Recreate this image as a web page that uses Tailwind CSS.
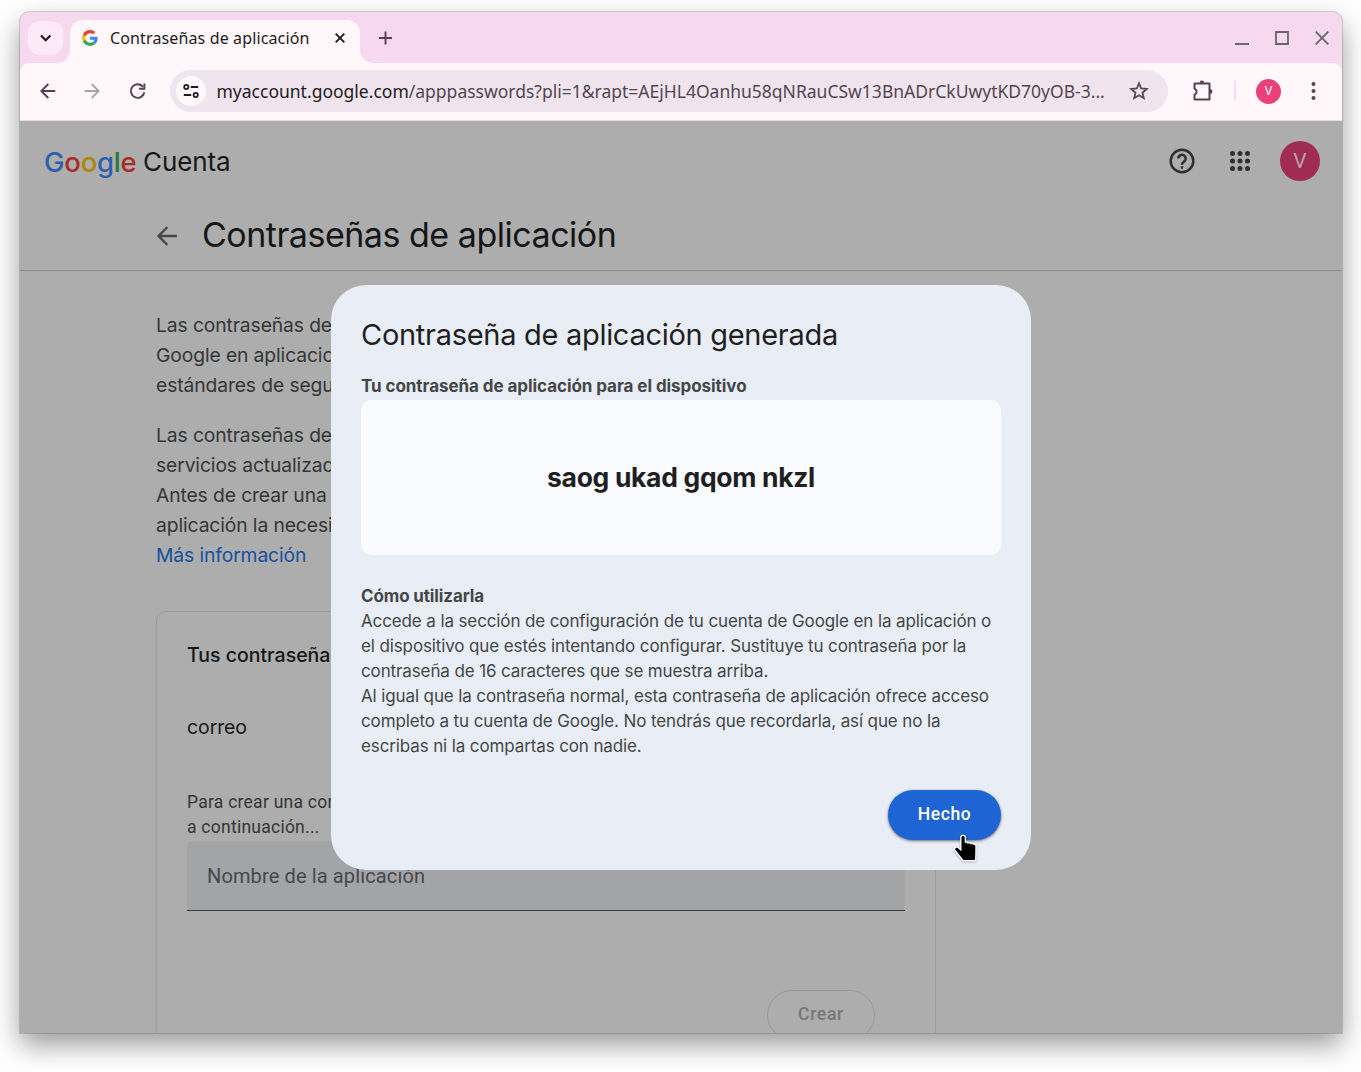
<!DOCTYPE html>
<html lang="es">
<head>
<meta charset="utf-8">
<title>Contraseñas de aplicación</title>
<script src="https://cdn.jsdelivr.net/npm/@tailwindcss/browser@4"></script>
</head>
<body class="h-[1072px] w-[1361px] overflow-hidden bg-white px-5 pt-3 font-[Inter,sans-serif]">
<div class="relative flex h-[1021px] w-[1322px] flex-col rounded-t-[10px] bg-[#f6d9ef] shadow-[0_0_0_1px_rgba(0,0,0,0.15),0_12px_28px_rgba(0,0,0,0.4)]">

  <!-- Tab strip -->
  <div class="flex h-[51px] shrink-0 items-start pt-2">
    <button class="ml-2 mt-px flex h-[34px] w-[35px] items-center justify-center rounded-xl bg-[#fde9f8]">
      <svg class="h-3 w-3" viewBox="0 0 12 12" fill="none" stroke="#1f1a1d" stroke-width="2.2"><path d="M1 3.500 5.700 8.200l4.700-4.700"/></svg>
    </button>
    <div class="relative ml-[7px] flex h-[43px] w-[290px] items-center rounded-t-[13px] bg-[#fff7fa] pb-[7px] pl-3">
      <svg class="absolute -left-[13px] bottom-0 h-[13px] w-[13px]" viewBox="0 0 13 13" fill="#fff7fa"><path d="M13 0v13H0A13 13 0 0 0 13 0"/></svg>
      <svg class="absolute -right-[13px] bottom-0 h-[13px] w-[13px]" viewBox="0 0 13 13" fill="#fff7fa"><path d="M0 0v13h13A13 13 0 0 1 0 0"/></svg>
      <svg class="h-4 w-4" viewBox="0 0 48 48"><path fill="#EA4335" d="M24 9.500c3.540 0 6.710 1.220 9.210 3.600l6.850-6.850C35.900 2.380 30.470 0 24 0 14.620 0 6.510 5.380 2.560 13.220l7.980 6.190C12.430 13.720 17.740 9.500 24 9.500z"/><path fill="#4285F4" d="M46.980 24.550c0-1.570-.15-3.090-.38-4.550H24v9.020h12.940c-.58 2.960-2.260 5.480-4.780 7.180l7.730 6c4.510-4.180 7.090-10.360 7.090-17.650z"/><path fill="#FBBC05" d="M10.530 28.590c-.48-1.450-.76-2.990-.76-4.590s.27-3.140.76-4.590l-7.980-6.190C.92 16.460 0 20.120 0 24s.92 7.540 2.560 10.780l7.970-6.190z"/><path fill="#34A853" d="M24 48c6.480 0 11.930-2.130 15.890-5.810l-7.730-6c-2.150 1.450-4.920 2.300-8.160 2.300-6.260 0-11.570-4.220-13.470-9.910l-7.980 6.190C6.510 42.620 14.620 48 24 48z"/></svg>
      <span class="ml-[12px] w-[201px] whitespace-nowrap font-['Noto_Sans',sans-serif] text-[16px] leading-6 tracking-[0.130px] text-[#1f1a1d]">Contraseñas de aplicación</span>
      <svg class="ml-[23.500px] mb-px h-[10px] w-[10px]" viewBox="0 0 10 10" stroke="#1f1a1d" stroke-width="1.900"><path d="m.7.7 8.600 8.600M9.300.7.7 9.300"/></svg>
    </div>
    <svg class="ml-[19px] mt-[11px] h-[14px] w-[14px]" viewBox="0 0 14 14" stroke="#5b3f52" stroke-width="1.900"><path d="M6.500 .5v13M0 7h13"/></svg>
    <div class="ml-auto mr-[13px] mt-[10.500px] flex gap-[26px]">
      <svg class="h-[14px] w-[14px]" viewBox="0 0 14 14" stroke="#686569" stroke-width="1.900"><path d="M0 13.500h14" transform="translate(0 -.5)"/></svg>
      <svg class="h-[14px] w-[14px]" viewBox="0 0 14 14" fill="none" stroke="#686569" stroke-width="1.800"><path d="M1 1h12v12H1z"/></svg>
      <svg class="h-[14px] w-[14px]" viewBox="0 0 14 14" stroke="#686569" stroke-width="1.800"><path d="m.7.7 12.600 12.600M13.300.7.7 13.300"/></svg>
    </div>
  </div>

  <!-- Toolbar -->
  <div class="flex h-[58px] shrink-0 items-center rounded-t-[9px] border-b border-[#ecdbe6] bg-[#fff7fa] pb-px pl-5">
    <svg class="h-4 w-4" viewBox="0 0 16 16" fill="none" stroke="#5b3f52" stroke-width="1.900"><path d="M15.300 8H1.500M8.300 1 1.300 8l7 7"/></svg>
    <svg class="ml-[28px] h-4 w-4" viewBox="0 0 16 16" fill="none" stroke="#aba3a8" stroke-width="1.800"><path d="M.7 8h13.800M7.700 1l7 7-7 7"/></svg>
    <svg class="ml-[29px] h-[18px] w-[18px]" viewBox="0 0 18 18" fill="none" stroke="#5b3f52" stroke-width="1.900"><path d="M14.200 5A6.800 6.800 0 1 0 15.400 10.300"/><path d="M15.400 1.500v5.300h-5.300"/></svg>
    <div class="ml-[23px] flex h-[42px] w-[998px] items-center rounded-full bg-[#f0e5ee] pl-[6px]">
      <div class="flex h-[30px] w-[30px] items-center justify-center rounded-full bg-[#fff7fa]">
        <svg class="h-4 w-4" viewBox="0 0 16 16" fill="none" stroke="#1f1a1d" stroke-width="1.800"><circle cx="3.300" cy="4" r="2.100"/><path d="M7.800 4h7.400M.8 12h7.400"/><circle cx="12.700" cy="12" r="2.100"/></svg>
      </div>
      <span class="ml-[10.500px] w-[890.500px] whitespace-nowrap font-['Noto_Sans',sans-serif] text-[17.500px] leading-6 text-[#544650]"><span class="text-[#1f1a1d]">myaccount.google.com</span>/apppasswords?pli=1&amp;rapt=AEjHL4Oanhu58qNRauCSw13BnADrCkUwytKD70yOB-3...</span>
      <svg class="ml-[22px] h-[20px] w-[20px]" viewBox="0 0 20 20" fill="none" stroke="#5b4856" stroke-width="1.800"><path d="m10 2.300 2.200 5.200 5.600.5-4.300 3.700 1.300 5.500-4.800-2.900-4.800 2.900 1.300-5.500L2.200 8l5.600-.5z"/></svg>
    </div>
    <svg class="ml-[23px] h-[22px] w-[22px]" viewBox="0 0 22 22"><path d="M3.500 3.500h15V19.500h-15v-4.800a3.200 3.200 0 0 0 0-6z" fill="none" stroke="#5b3f52" stroke-width="2" stroke-linejoin="round"/><path d="M8.500 2.800a2.400 2.400 0 0 1 4.800 0zM19 9a2.500 2.500 0 0 1 0 5z" fill="#5b3f52"/></svg>
    <div class="ml-[21px] h-5 w-[2px] bg-[#fdd8f3]"></div>
    <div class="ml-[20px] flex h-[25px] w-[25px] items-center justify-center rounded-full bg-[#ec407a] pt-px font-[Roboto,sans-serif] text-[12.500px] text-white">V</div>
    <svg class="ml-[30px] h-5 w-[5px]" viewBox="0 0 5 20" fill="#5b3f52"><circle cx="2.500" cy="3" r="2"/><circle cx="2.500" cy="10" r="2"/><circle cx="2.500" cy="17" r="2"/></svg>
  </div>

  <!-- Page -->
  <main class="flex min-h-0 flex-1 flex-col overflow-hidden bg-[#adadad] text-[#333637]">
    <header class="flex h-20 shrink-0 items-center pl-6">
      <span class="w-[99px] pt-px text-[27.500px] font-medium leading-8 tracking-[-0.250px]"><span class="text-[#2e5fad]">G</span><span class="text-[#a82e25]">o</span><span class="text-[#b08407]">o</span><span class="text-[#2e5fad]">g</span><span class="text-[#24793c]">l</span><span class="text-[#a82e25]">e</span></span>
      <span class="pt-[2px] text-[26px] leading-8 tracking-[-0.100px] text-[#151617]">Cuenta</span>
      <svg class="ml-auto h-[26px] w-[26px]" viewBox="0 0 26 26" fill="none" stroke="#2d2f30" stroke-width="2.500"><circle cx="13" cy="13" r="11.300"/><path d="M9.300 10.500a3.700 3.700 0 1 1 6.100 2.800c-1.300 1.100-2.400 1.600-2.400 3.500"/><path d="M13 18.200v2.500"/></svg>
      <svg class="ml-[35px] h-5 w-5" viewBox="0 0 20 20" fill="#2d2f30"><circle cx="2.500" cy="2.500" r="2.500"/><circle cx="10" cy="2.500" r="2.500"/><circle cx="17.500" cy="2.500" r="2.500"/><circle cx="2.500" cy="10" r="2.500"/><circle cx="10" cy="10" r="2.500"/><circle cx="17.500" cy="10" r="2.500"/><circle cx="2.500" cy="17.500" r="2.500"/><circle cx="10" cy="17.500" r="2.500"/><circle cx="17.500" cy="17.500" r="2.500"/></svg>
      <div class="ml-[30px] mr-[22px] flex h-10 w-10 items-center justify-center rounded-full bg-[#a02c53] pt-[2px] font-[Roboto,sans-serif] text-[21px] text-[#b9a2aa]">V</div>
    </header>
    <div class="flex h-[70px] shrink-0 items-center border-b border-[#919191] pl-[137px]">
      <svg class="h-5 w-5" viewBox="0 0 20 20" fill="none" stroke="#45484b" stroke-width="2.300"><path d="M20 10H2M10.500 1 1.500 10l9 9"/></svg>
      <h1 class="ml-[25px] whitespace-nowrap pb-[2px] text-[34px] leading-10 tracking-[-0.480px] text-[#151617]">Contraseñas de aplicación</h1>
    </div>
    <div class="ml-[136px] w-[780px] pt-[39px]">
      <div class="whitespace-nowrap text-[19.300px] leading-[30px] tracking-[-0.110px]">
        <p>Las contraseñas de<br>Google en aplicacion<br>estándares de segur</p>
        <p class="mt-5">Las contraseñas de<br>servicios actualizad<br>Antes de crear una<br>aplicación la necesit<br><a class="text-[#17509f]">Más información</a></p>
      </div>
      <section class="mt-[41px] h-[500px] rounded-t-[10px] border border-[#9b9b9b] px-[30px] pt-7">
        <h2 class="whitespace-nowrap text-[19.500px] font-medium leading-[30px] text-[#151617]">Tus contraseñas</h2>
        <p class="mt-[42px] text-[19.500px] leading-[30px] tracking-[-0.100px] text-[#151617]">correo</p>
        <p class="mt-[48px] whitespace-nowrap font-[Roboto,sans-serif] text-[17.500px] leading-[25px] tracking-[0.250px] text-[#333637]">Para crear una con<br>a continuación...</p>
        <div class="mt-px h-[70px] rounded-t-[5px] border-b border-[#3a3d42] bg-[#a3a4a6] pl-5 font-[Roboto,sans-serif] text-[20px] leading-[70px] tracking-[0.130px] text-[#45484b]">Nombre de la aplicación</div>
        <div class="mt-[79px] flex justify-end pr-[30px]">
          <button class="h-[50px] w-[108px] rounded-full border border-[#999] pb-px font-[Roboto,sans-serif] text-[17.500px] font-medium tracking-[0.700px] text-[#767778]">Crear</button>
        </div>
      </section>
    </div>
  </main>

  <!-- Dialog -->
  <div class="absolute left-[311px] top-[273px] flex h-[585px] w-[700px] flex-col whitespace-nowrap rounded-[35px] bg-[#e8edf6] p-[30px] text-[#444746]">
    <h2 class="text-[29px] leading-10 tracking-[-0.290px] text-[#1f1f1f]">Contraseña de aplicación generada</h2>
    <h3 class="mt-[19px] text-[17px] font-bold leading-[25px] tracking-[-0.060px]">Tu contraseña de aplicación para el dispositivo</h3>
    <div class="mt-px flex h-[155px] items-center justify-center rounded-[10px] bg-[#f9fbff] pt-px text-[26.500px] font-bold tracking-[-0.330px] text-[#1f1f1f]">saog ukad gqom nkzl</div>
    <h3 class="mt-[29px] text-[17px] font-bold leading-[25px] tracking-[-0.130px]">Cómo utilizarla</h3>
    <p class="text-[17px] leading-[25px] tracking-[-0.120px]">Accede a la sección de configuración de tu cuenta de Google en la aplicación o<br>el dispositivo que estés intentando configurar. Sustituye tu contraseña por la<br>contraseña de 16 caracteres que se muestra arriba.<br>Al igual que la contraseña normal, esta contraseña de aplicación ofrece acceso<br>completo a tu cuenta de Google. No tendrás que recordarla, así que no la<br>escribas ni la compartas con nadie.</p>
    <button class="mt-[31px] h-[50px] w-[113px] shrink-0 self-end rounded-full bg-[#1f64d4] pb-[2px] font-[Roboto,sans-serif] text-[17.500px] font-medium tracking-[0.550px] text-white shadow-[0_1px_3px_rgba(0,0,0,0.55)]">Hecho</button>
  </div>

  <!-- Pointer -->
  <svg class="absolute left-[933px] top-[821px] h-[30px] w-[26px] drop-shadow-[0_1px_1px_rgba(0,0,0,0.25)]" viewBox="0 0 26 30"><path d="M8.500 4.500c0-2 3.200-2 3.200 0v5.700c1-.8 2.700-.3 3 .7 1.200-.7 2.700-.2 3 .7 1.200-.6 3.600 0 4.600 1.200v6.200L22 27H10.500L2.500 17c-1-1.600.6-2.900 2.100-1.900l3.900 3.200z" fill="#000" stroke="#fff" stroke-width="2.600" stroke-linejoin="round" paint-order="stroke"/></svg>
</div>
</body>
</html>
